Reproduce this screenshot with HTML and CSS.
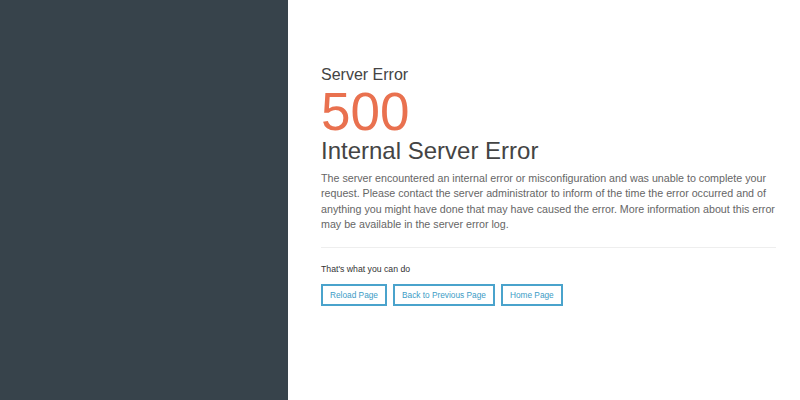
FILE: index.html
```html
<!DOCTYPE html>
<html lang="en">
<head>
    <meta charset="UTF-8">
    <meta name="viewport" content="width=device-width, initial-scale=1.0">
    <title>500 Internal Server Error</title>
    <link rel="stylesheet" href="styles.css">
</head>
<body>
    <div class="layout">
        <aside class="sidebar"></aside>

        <main class="content">
            <h2 class="label">Server Error</h2>
            <h1 class="code">500</h1>
            <h3 class="title">Internal Server Error</h3>
            <p class="message">The server encountered an internal error or misconfiguration and was unable to complete your request. Please contact the server administrator to inform of the time the error occurred and of anything you might have done that may have caused the error. More information about this error may be available in the server error log.</p>
            <hr>
            <p class="hint">That's what you can do</p>
            <div class="actions">
                <a href="#" class="btn">Reload Page</a>
                <a href="#" class="btn">Back to Previous Page</a>
                <a href="#" class="btn">Home Page</a>
            </div>
        </main>
    </div>
</body>
</html>
```

FILE: styles.css
```css
* {
    box-sizing: border-box;
}

body {
    margin: 0;
    font-family: "Liberation Sans", Arial, sans-serif;
    color: #555;
    background: #fff;
}

.layout {
    display: flex;
    height: 400px;
}

.sidebar {
    width: 288px;
    flex-shrink: 0;
    background-color: #37434b;
}

.content {
    width: 488px;
    padding: 65px 0 0 33px;
}

.label {
    margin: 0;
    font-size: 16px;
    font-weight: normal;
    color: #444;
    line-height: 20px;
}

.code {
    margin: 2px 0 -2px;
    font-size: 53px;
    font-weight: normal;
    color: #e9714f;
    line-height: 50px;
}

.title {
    margin: 0;
    font-size: 24px;
    font-weight: normal;
    color: #444;
    line-height: 32px;
}

.message {
    margin: 4px 0 0;
    font-size: 10.7px;
    line-height: 15.3px;
    color: #666;
}

hr {
    border: 0;
    border-top: 1px solid #eee;
    margin: 15px 0 16px;
}

.hint {
    margin: 0;
    font-size: 8.7px;
    color: #333;
}

.actions {
    display: flex;
    gap: 6px;
    margin-top: 10px;
}

.btn {
    display: inline-block;
    padding: 0 7px;
    height: 22px;
    line-height: 18px;
    border: 2px solid #4aa3cc;
    font-size: 8.3px;
    color: #3c9cc6;
    text-decoration: none;
}
```
